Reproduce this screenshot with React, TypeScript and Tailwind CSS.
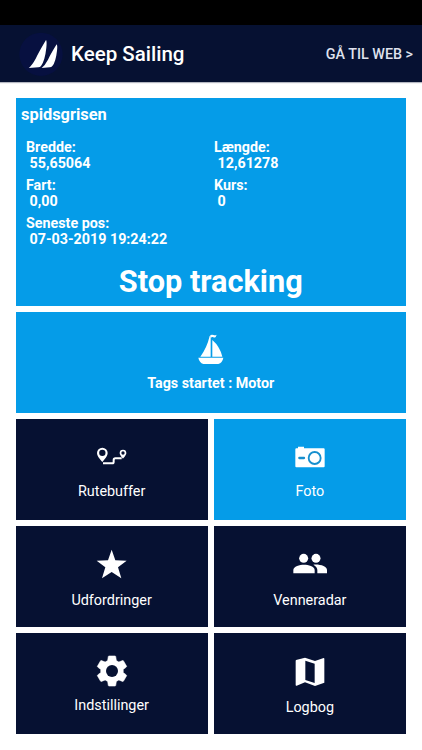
import type { ReactNode } from 'react';

type TileProps = {
  label: string;
  icon: ReactNode;
  active?: boolean;
  className?: string;
};

const Tile = ({ label, icon, active = false, className = 'pt-[62.5px]' }: TileProps) => (
  <button
    type="button"
    className={`relative h-[101px] flex flex-col items-center text-white text-[14.4px] leading-5 ${className} ${
      active ? 'bg-[#059ce8]' : 'bg-[#061132]'
    }`}
  >
    {icon}
    <span>{label}</span>
  </button>
);

const Field = ({ label, value }: { label: string; value: string }) => (
  <div className="h-[38px] text-[14.3px] leading-[16.5px] font-bold">
    <p>{label}</p>
    <p className="pl-[3.5px]">{value}</p>
  </div>
);

const LogoIcon = () => (
  <svg viewBox="57 93 132 135" className="w-11 h-[45px] shrink-0">
    <circle cx="123" cy="160" r="65" fill="#071040" />
    <path d="M138 117Q141 120 139 140Q135 178 123 195Q120 199 115 199L86 201Q96 193 107 173Q117 152 138 117Z" fill="#fff" />
    <path d="M170 130Q173 134 171 149Q167 184 157 195Q154 199 149 199L125 201Q135 193 144 176Q152 159 170 130Z" fill="#fff" />
  </svg>
);

const BoatIcon = () => (
  <svg viewBox="294 238 78 93" className="w-[26px] h-[31px]" fill="#fff">
    <path d="M332 243V306H301Q321 279 329 244Z" />
    <path d="M337 256Q360 276 367 306H337Z" />
    <path d="M331 241Q337 239 341 241Q345 243 350 240L347 247Q343 250 339 247Q336 246 332 249Z" />
    <path d="M295 309H370Q367 325 355 328H310Q298 324 295 309Z" />
  </svg>
);

const RouteIcon = () => (
  <svg viewBox="78 38 93 54" className="absolute top-[28px] w-[31px] h-[18px]" fill="#fff">
    <path
      fillRule="evenodd"
      d="M97 40A16 16 0 0 0 81 56C81 67 97 83 97 83S113 67 113 56A16 16 0 0 0 97 40ZM97 46A9.5 9.5 0 1 1 97 65A9.5 9.5 0 1 1 97 46Z"
    />
    <path
      fillRule="evenodd"
      d="M159 46A10 10 0 0 0 149 56C149 63 159 73 159 73S169 63 169 56A10 10 0 0 0 159 46ZM159 51A5 5 0 1 1 159 61A5 5 0 1 1 159 51Z"
    />
    <path d="M99 87H127Q131 87 131 82V77Q131 72 136 72H155" fill="none" stroke="#fff" strokeWidth="6" />
  </svg>
);

const CameraIcon = () => (
  <svg viewBox="90 32 90 66" className="absolute top-[27px] w-[30px] h-[22px]">
    <path d="M94 39H99V34H117V39H176Q179 39 179 42V93Q179 96 176 96H94Q91 96 91 93V42Q91 39 94 39Z" fill="#fff" />
    <circle cx="149" cy="68" r="18" fill="none" stroke="#168fce" strokeWidth="5.5" />
    <path d="M103 68H117" stroke="#168fce" strokeWidth="7" strokeLinecap="round" />
  </svg>
);

const StarIcon = () => (
  <svg viewBox="108 28 93 90" className="absolute top-[23px] w-[31px] h-[30px]">
    <path d="M155 30L166 62L200 63L174 83L184 116L155 97L126 116L136 83L110 63L144 62Z" fill="#fff" />
  </svg>
);

const FriendsIcon = () => (
  <svg viewBox="84 40 102 63" className="absolute top-[27px] w-[34px] h-[21px]" fill="#fff">
    <circle cx="116" cy="56" r="13.5" />
    <circle cx="153" cy="56" r="13.5" />
    <path d="M85 101V91C85 80 104 75 117 75S149 80 149 91V101Z" />
    <path d="M145 75C165 73 186 80 186 91V101H157V91Q157 82 145 75Z" />
  </svg>
);

const GearIcon = () => (
  <svg viewBox="0 0 24 24" className="absolute top-5 w-9 h-9">
    <path
      d="M19.43 12.98c.04-.32.07-.64.07-.98s-.03-.66-.07-.98l2.11-1.65c.19-.15.24-.42.12-.64l-2-3.46c-.12-.22-.39-.3-.61-.22l-2.49 1c-.52-.4-1.08-.73-1.69-.98l-.38-2.65C14.46 2.18 14.25 2 14 2h-4c-.25 0-.46.18-.49.42l-.38 2.65c-.61.25-1.17.59-1.69.98l-2.49-1c-.23-.09-.49 0-.61.22l-2 3.46c-.13.22-.07.49.12.64l2.11 1.65c-.04.32-.07.65-.07.98s.03.66.07.98l-2.11 1.65c-.19.15-.24.42-.12.64l2 3.46c.12.22.39.3.61.22l2.49-1c.52.4 1.08.73 1.69.98l.38 2.65c.03.24.24.42.49.42h4c.25 0 .46-.18.49-.42l.38-2.65c.61-.25 1.17-.59 1.69-.98l2.49 1c.23.09.49 0 .61-.22l2-3.46c.12-.22.07-.49-.12-.64l-2.11-1.65z"
      fill="#fff"
      stroke="#fff"
      strokeWidth="0.4"
    />
    <circle cx="12" cy="12" r="4" fill="#061132" />
  </svg>
);

const MapIcon = () => (
  <svg viewBox="90 37 90 90" className="absolute top-[24px] w-[30px] h-[30px]">
    <path
      fillRule="evenodd"
      d="M93 46L120 39L150 49L176 40Q178 40 178 42V114L150 124L120 113L95 123Q92 124 92 121V48ZM121 48V106L149 115V57Z"
      fill="#fff"
    />
  </svg>
);

const App = () => {
  return (
    <div className="min-h-[750px] bg-white font-['Roboto','Liberation_Sans',sans-serif] text-white">
      {/* Status bar */}
      <div className="h-[25px] bg-black" />

      <header className="h-[57px] bg-[#061132] flex items-center pl-[19px] pr-[9px] pt-px shadow-[0_1px_1px_rgba(6,17,50,0.3)]">
        <LogoIcon />
        <h1 className="ml-2 pt-px text-[20.5px] font-medium">Keep Sailing</h1>
        <a href="#" className="ml-auto pt-px text-[14.3px] text-[#dfe2ee] font-medium">
          GÅ TIL WEB &gt;
        </a>
      </header>

      <main className="pt-[15.5px] pl-[15.5px] pr-4 flex flex-col gap-[6px]">
        <section className="h-[208.5px] bg-[#059ce8]">
          <h2 className="pl-[5.5px] pt-[5px] text-[16.4px] leading-6 font-bold">spidsgrisen</h2>
          <div className="pt-[12px] pl-[10.5px] grid grid-cols-[188px_1fr]">
            <Field label="Bredde:" value="55,65064" />
            <Field label="Længde:" value="12,61278" />
            <Field label="Fart:" value="0,00" />
            <Field label="Kurs:" value="0" />
            <Field label="Seneste pos:" value="07-03-2019 19:24:22" />
          </div>
          <button type="button" className="block w-full mt-[9px] text-[30.7px] leading-10 font-bold text-center">
            Stop tracking
          </button>
        </section>

        <section className="h-[101px] bg-[#059ce8] flex flex-col items-center pt-[22px]">
          <BoatIcon />
          <p className="mt-[8px] text-[14.3px] leading-5 font-bold">Tags startet : Motor</p>
        </section>

        <nav className="grid grid-cols-2 gap-[6px]">
          <Tile label="Rutebuffer" icon={<RouteIcon />} />
          <Tile label="Foto" icon={<CameraIcon />} active />
          <Tile label="Udfordringer" icon={<StarIcon />} className="pt-[64.5px]" />
          <Tile label="Venneradar" icon={<FriendsIcon />} className="pt-[64.5px]" />
          <Tile label="Indstillinger" icon={<GearIcon />} />
          <Tile label="Logbog" icon={<MapIcon />} className="pt-[64.5px]" />
        </nav>
      </main>
    </div>
  );
};

export default App;
